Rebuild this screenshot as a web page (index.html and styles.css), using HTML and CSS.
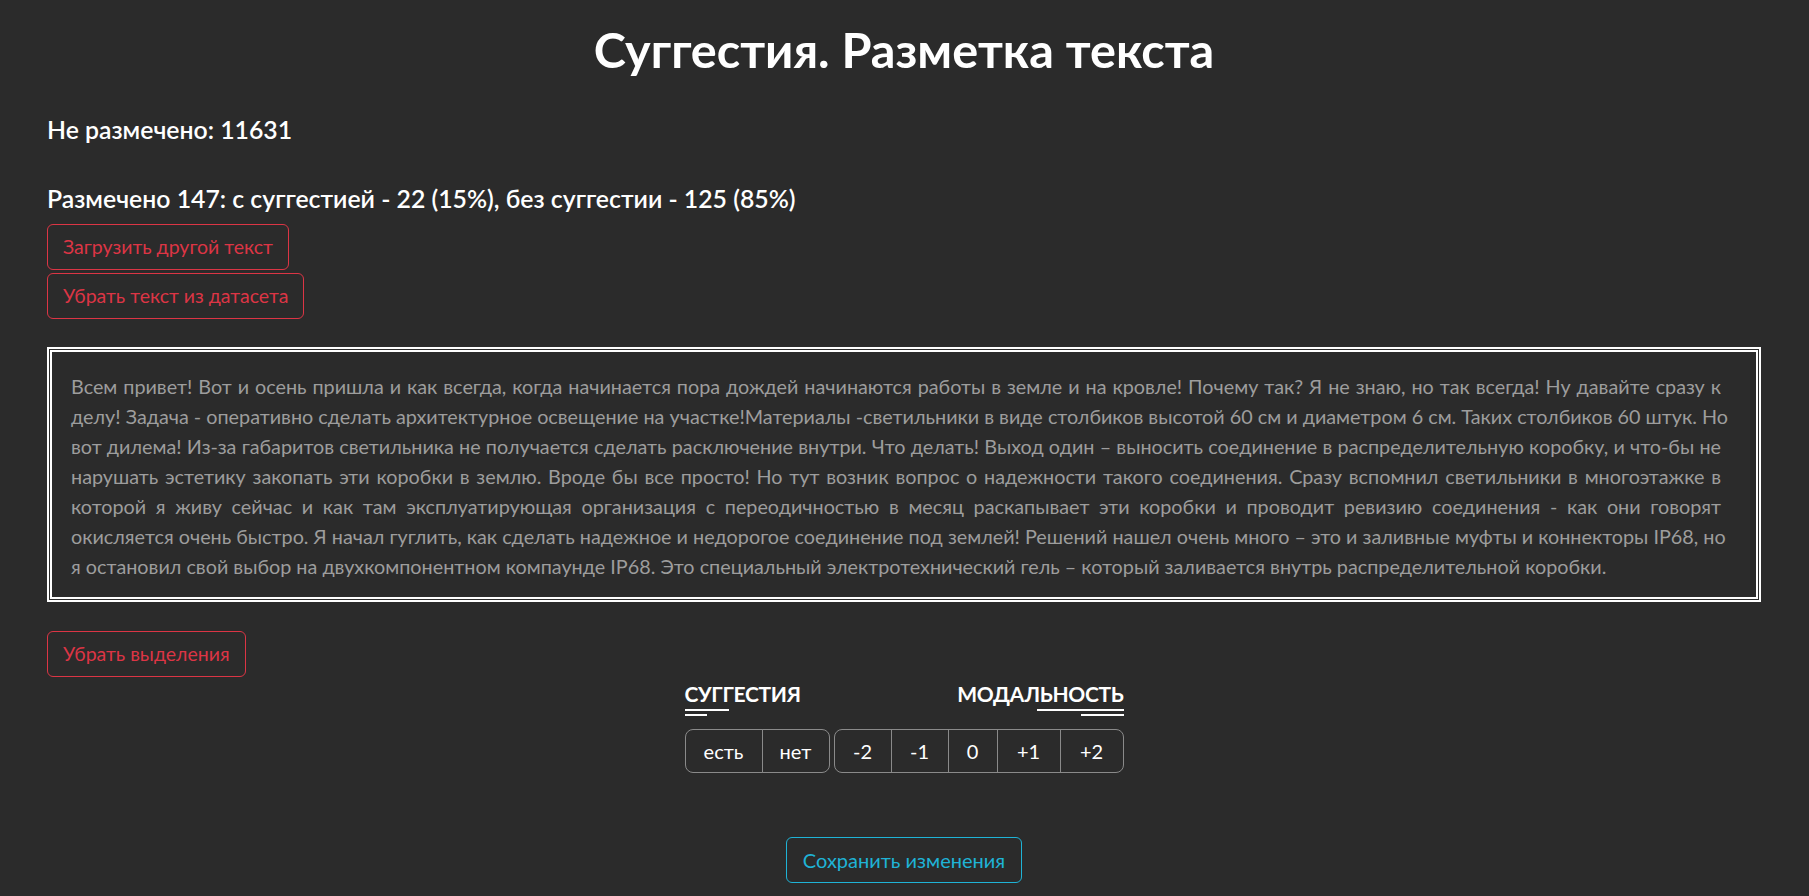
FILE: index.html
```html
<!DOCTYPE html>
<html lang="ru">
<head>
<meta charset="utf-8">
<title>Суггестия. Разметка текста</title>
<link rel="stylesheet" href="styles.css">
</head>
<body>
<main class="page">
  <h1 class="title">Суггестия. Разметка текста</h1>
  <h5 class="stat stat-first">Не размечено: 11631</h5>
  <h5 class="stat stat-second">Размечено 147: с суггестией - 22 (15%), без суггестии - 125 (85%)</h5>
  <div class="actions">
    <button class="btn btn-danger">Загрузить другой текст</button>
    <button class="btn btn-danger">Убрать текст из датасета</button>
  </div>
  <div class="text-box">
    <p class="text-body">
      <span class="ln">Всем привет! Вот и осень пришла и как всегда, когда начинается пора дождей начинаются работы в земле и на кровле! Почему так? Я не знаю, но так всегда! Ну давайте сразу к</span>
      <span class="ln">делу! Задача - оперативно сделать архитектурное освещение на участке!Материалы -светильники в виде столбиков высотой 60 см и диаметром 6 см. Таких столбиков 60 штук. Но</span>
      <span class="ln">вот дилема! Из-за габаритов светильника не получается сделать расключение внутри. Что делать! Выход один – выносить соединение в распределительную коробку, и что-бы не</span>
      <span class="ln">нарушать эстетику закопать эти коробки в землю. Вроде бы все просто! Но тут возник вопрос о надежности такого соединения. Сразу вспомнил светильники в многоэтажке в</span>
      <span class="ln">которой я живу сейчас и как там эксплуатирующая организация с переодичностью в месяц раскапывает эти коробки и проводит ревизию соединения - как они говорят</span>
      <span class="ln">окисляется очень быстро. Я начал гуглить, как сделать надежное и недорогое соединение под землей! Решений нашел очень много – это и заливные муфты и коннекторы IP68, но</span>
      <span class="ln ln-last">я остановил свой выбор на двухкомпонентном компаунде IP68. Это специальный электротехнический гель – который заливается внутрь распределительной коробки.</span>
    </p>
  </div>
  <div class="actions actions-clear">
    <button class="btn btn-danger">Убрать выделения</button>
  </div>
  <div class="controls">
    <div class="control-col col-left">
      <div class="control-title">СУГГЕСТИЯ</div>
      <div class="uline uline-left"><span class="bar bar-long"></span><span class="bar bar-short"></span></div>
      <div class="btn-group">
        <button class="seg w-est">есть</button>
        <button class="seg w-net">нет</button>
      </div>
    </div>
    <div class="control-col col-right">
      <div class="control-title">МОДАЛЬНОСТЬ</div>
      <div class="uline uline-right"><span class="bar bar-long2"></span><span class="bar bar-short2"></span></div>
      <div class="btn-group">
        <button class="seg w-m2">-2</button>
        <button class="seg w-m1">-1</button>
        <button class="seg w-0">0</button>
        <button class="seg w-p1">+1</button>
        <button class="seg w-p2">+2</button>
      </div>
    </div>
  </div>
  <div class="save-row">
    <button class="btn btn-info">Сохранить изменения</button>
  </div>
</main>
</body>
</html>
```
FILE: styles.css
```css
html, body {
  margin: 0;
  padding: 0;
  background: #2b2b2b;
}
body {
  font-family: "Lato", "Open Sans", sans-serif;
  color: #ffffff;
}
.page {
  padding: 20px 48px 0 47px;
  display: flex;
  flex-direction: column;
}
.title {
  margin: 0;
  font-size: 48.6px;
  line-height: 58.8px;
  font-weight: 700;
  text-align: center;
  color: #fff;
}
.stat {
  margin: 0;
  font-size: 24.8px;
  line-height: 28.8px;
  font-weight: 600;
  color: #fff;
}
.stat-first { margin-top: 37px; }
.stat-second { margin-top: 40px; }
.actions {
  display: flex;
  flex-direction: column;
  align-items: flex-start;
  gap: 3px;
  margin-top: 10.6px;
}
.btn {
  font-family: "Lato", "Open Sans", sans-serif;
  font-size: 19.5px;
  line-height: 30px;
  padding: 7px 15px;
  background: transparent;
  border: 1px solid;
  border-radius: 6px;
  cursor: pointer;
}
.btn-danger {
  color: #dc3545;
  border-color: #dc3545;
}
.btn-info {
  color: #1fb3d6;
  border-color: #1fb3d6;
  font-size: 20px;
  padding: 7px 16px;
}
.text-box {
  margin-top: 28px;
  border: 5px double #ffffff;
  padding: 19px 35px 16px 19px;
}
.text-body {
  margin: 0;
  font-size: 19.8px;
  line-height: 30px;
  color: #9d9d9d;
}
.ln {
  display: block;
  white-space: nowrap;
  text-align: justify;
  text-align-last: justify;
}
.ln-last {
  text-align: left;
  text-align-last: left;
}
.actions-clear { margin-top: 29px; }
.controls {
  display: flex;
  justify-content: center;
  gap: 4px;
  margin-top: 4.3px;
}
.control-col {
  display: flex;
  flex-direction: column;
}
.col-left { align-items: flex-start; }
.col-right { align-items: flex-end; }
.control-title {
  font-size: 21px;
  line-height: 25.2px;
  font-weight: 700;
  letter-spacing: -0.3px;
  color: #fff;
}
.uline {
  display: flex;
  flex-direction: column;
  gap: 3px;
  margin-top: 2.5px;
  align-self: stretch;
}
.uline-left { align-items: flex-start; }
.uline-right { align-items: flex-end; }
.bar {
  display: block;
  height: 2px;
  background: #fff;
}
.bar-long { width: 44px; }
.bar-short { width: 22px; }
.bar-long2 { width: 87px; }
.bar-short2 { width: 43px; }
.btn-group {
  display: flex;
  margin-top: 13px;
}
.seg {
  font-family: "Lato", "Open Sans", sans-serif;
  font-size: 20px;
  line-height: 30px;
  padding: 6px 0;
  text-align: center;
  color: #fff;
  background: transparent;
  border: 1px solid #8a8a8a;
  border-radius: 0;
  margin-left: -1px;
}
.seg:first-child {
  margin-left: 0;
  border-radius: 8px 0 0 8px;
}
.seg:last-child {
  border-radius: 0 8px 8px 0;
}
.w-est { width: 78px; }
.w-net { width: 68px; }
.w-m2 { width: 58px; }
.w-m1 { width: 58px; }
.w-0 { width: 50px; }
.w-p1 { width: 64px; }
.w-p2 { width: 64px; }
.save-row {
  display: flex;
  justify-content: center;
  margin-top: 64px;
}
```
